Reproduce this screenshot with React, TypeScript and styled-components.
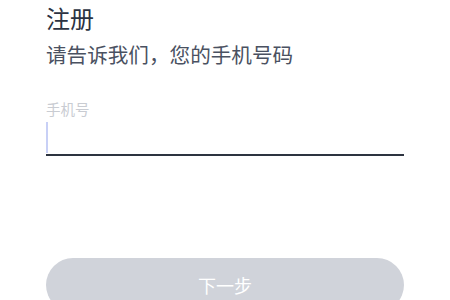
import React from "react";
import styled, { createGlobalStyle } from "styled-components";

const Global = createGlobalStyle`
  html, body { margin: 0; padding: 0; background: #ffffff; }
  body { font-family: "Noto Sans CJK SC", "Noto Sans", sans-serif; }
  * { box-sizing: border-box; }
`;

const Page = styled.div`
  width: 450px;
  height: 300px;
  overflow: hidden;
  padding: 1px 46px 0;
  display: flex;
  flex-direction: column;
`;

const Title = styled.h1`
  margin: 0;
  font-size: 24px;
  line-height: 33px;
  font-weight: 400;
  color: #2c3342;
`;

const Subtitle = styled.p`
  margin: 6px 0 0;
  font-size: 20.6px;
  line-height: 28px;
  font-weight: 400;
  color: #4a5161;
`;

const Field = styled.div`
  margin-top: 31px;
  display: flex;
  flex-direction: column;
`;

const Label = styled.label`
  font-size: 14.5px;
  line-height: 20px;
  color: #c9ccd2;
`;

const InputBox = styled.div`
  margin-top: 2px;
  height: 35px;
  border-bottom: 2px solid #2d3440;
  display: flex;
  align-items: flex-start;
`;

const Caret = styled.span`
  display: block;
  width: 2px;
  height: 31px;
  margin-top: 1px;
  background: #c8d0f6;
`;

const Spacer = styled.div`
  flex: 0 0 102px;
`;

const Button = styled.button`
  width: 100%;
  height: 54px;
  flex: 0 0 54px;
  border: none;
  border-radius: 27px;
  background: #d0d3da;
  color: #ffffff;
  font-family: "Noto Sans CJK SC", "Noto Sans", sans-serif;
  font-size: 18px;
  line-height: 24px;
  padding: 0;
`;

export default function App() {
  return (
    <>
      <Global />
      <Page>
        <Title>注册</Title>
        <Subtitle>请告诉我们，您的手机号码</Subtitle>
        <Field>
          <Label>手机号</Label>
          <InputBox>
            <Caret />
          </InputBox>
        </Field>
        <Spacer />
        <Button>下一步</Button>
      </Page>
    </>
  );
}
